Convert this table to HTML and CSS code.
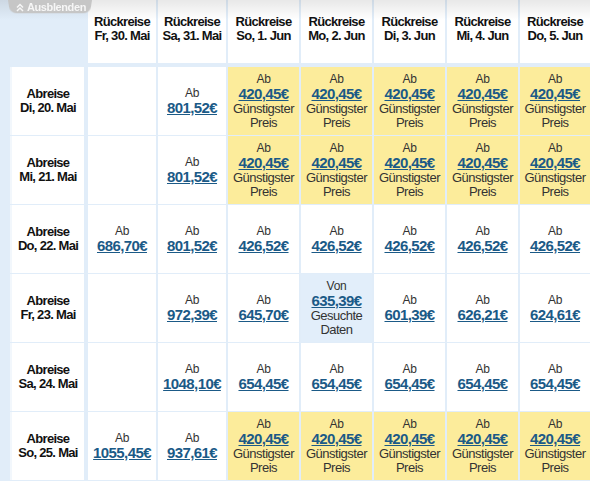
FILE: index.html
```html
<!DOCTYPE html>
<html lang="de">
<head>
  <meta charset="UTF-8">
  <meta name="viewport" content="width=device-width, initial-scale=1.0">
  <title>Flexible Reisedaten</title>
  <link rel="stylesheet" href="styles.css">
</head>
<body>
  <div class="matrix">
    <div class="head">
      <div class="corner">
        <button class="toggle">
          <svg width="8" height="9" viewBox="0 0 8 9"><polyline points="1,4.5 4,1.5 7,4.5"/><polyline points="1,8 4,5 7,8"/></svg>
          Ausblenden
        </button>
      </div>
      <div class="col-head">Rückreise<br>Fr, 30. Mai</div>
      <div class="col-head">Rückreise<br>Sa, 31. Mai</div>
      <div class="col-head">Rückreise<br>So, 1. Jun</div>
      <div class="col-head">Rückreise<br>Mo, 2. Jun</div>
      <div class="col-head">Rückreise<br>Di, 3. Jun</div>
      <div class="col-head">Rückreise<br>Mi, 4. Jun</div>
      <div class="col-head">Rückreise<br>Do, 5. Jun</div>
    </div>

    <div class="grid">
      <!-- Di, 20. Mai -->
      <div class="row-head">Abreise<br>Di, 20. Mai</div>
      <div class="cell"></div>
      <div class="cell"><span class="lbl">Ab</span><a class="price" href="#">801,52€</a></div>
      <div class="cell best"><span class="lbl">Ab</span><a class="price" href="#">420,45€</a><span class="note">Günstigster<br>Preis</span></div>
      <div class="cell best"><span class="lbl">Ab</span><a class="price" href="#">420,45€</a><span class="note">Günstigster<br>Preis</span></div>
      <div class="cell best"><span class="lbl">Ab</span><a class="price" href="#">420,45€</a><span class="note">Günstigster<br>Preis</span></div>
      <div class="cell best"><span class="lbl">Ab</span><a class="price" href="#">420,45€</a><span class="note">Günstigster<br>Preis</span></div>
      <div class="cell best"><span class="lbl">Ab</span><a class="price" href="#">420,45€</a><span class="note">Günstigster<br>Preis</span></div>

      <!-- Mi, 21. Mai -->
      <div class="row-head">Abreise<br>Mi, 21. Mai</div>
      <div class="cell"></div>
      <div class="cell"><span class="lbl">Ab</span><a class="price" href="#">801,52€</a></div>
      <div class="cell best"><span class="lbl">Ab</span><a class="price" href="#">420,45€</a><span class="note">Günstigster<br>Preis</span></div>
      <div class="cell best"><span class="lbl">Ab</span><a class="price" href="#">420,45€</a><span class="note">Günstigster<br>Preis</span></div>
      <div class="cell best"><span class="lbl">Ab</span><a class="price" href="#">420,45€</a><span class="note">Günstigster<br>Preis</span></div>
      <div class="cell best"><span class="lbl">Ab</span><a class="price" href="#">420,45€</a><span class="note">Günstigster<br>Preis</span></div>
      <div class="cell best"><span class="lbl">Ab</span><a class="price" href="#">420,45€</a><span class="note">Günstigster<br>Preis</span></div>

      <!-- Do, 22. Mai -->
      <div class="row-head">Abreise<br>Do, 22. Mai</div>
      <div class="cell"><span class="lbl">Ab</span><a class="price" href="#">686,70€</a></div>
      <div class="cell"><span class="lbl">Ab</span><a class="price" href="#">801,52€</a></div>
      <div class="cell"><span class="lbl">Ab</span><a class="price" href="#">426,52€</a></div>
      <div class="cell"><span class="lbl">Ab</span><a class="price" href="#">426,52€</a></div>
      <div class="cell"><span class="lbl">Ab</span><a class="price" href="#">426,52€</a></div>
      <div class="cell"><span class="lbl">Ab</span><a class="price" href="#">426,52€</a></div>
      <div class="cell"><span class="lbl">Ab</span><a class="price" href="#">426,52€</a></div>

      <!-- Fr, 23. Mai -->
      <div class="row-head">Abreise<br>Fr, 23. Mai</div>
      <div class="cell"></div>
      <div class="cell"><span class="lbl">Ab</span><a class="price" href="#">972,39€</a></div>
      <div class="cell"><span class="lbl">Ab</span><a class="price" href="#">645,70€</a></div>
      <div class="cell picked"><span class="lbl">Von</span><a class="price" href="#">635,39€</a><span class="note">Gesuchte<br>Daten</span></div>
      <div class="cell"><span class="lbl">Ab</span><a class="price" href="#">601,39€</a></div>
      <div class="cell"><span class="lbl">Ab</span><a class="price" href="#">626,21€</a></div>
      <div class="cell"><span class="lbl">Ab</span><a class="price" href="#">624,61€</a></div>

      <!-- Sa, 24. Mai -->
      <div class="row-head">Abreise<br>Sa, 24. Mai</div>
      <div class="cell"></div>
      <div class="cell"><span class="lbl">Ab</span><a class="price" href="#">1048,10€</a></div>
      <div class="cell"><span class="lbl">Ab</span><a class="price" href="#">654,45€</a></div>
      <div class="cell"><span class="lbl">Ab</span><a class="price" href="#">654,45€</a></div>
      <div class="cell"><span class="lbl">Ab</span><a class="price" href="#">654,45€</a></div>
      <div class="cell"><span class="lbl">Ab</span><a class="price" href="#">654,45€</a></div>
      <div class="cell"><span class="lbl">Ab</span><a class="price" href="#">654,45€</a></div>

      <!-- So, 25. Mai -->
      <div class="row-head">Abreise<br>So, 25. Mai</div>
      <div class="cell"><span class="lbl">Ab</span><a class="price" href="#">1055,45€</a></div>
      <div class="cell"><span class="lbl">Ab</span><a class="price" href="#">937,61€</a></div>
      <div class="cell best"><span class="lbl">Ab</span><a class="price" href="#">420,45€</a><span class="note">Günstigster<br>Preis</span></div>
      <div class="cell best"><span class="lbl">Ab</span><a class="price" href="#">420,45€</a><span class="note">Günstigster<br>Preis</span></div>
      <div class="cell best"><span class="lbl">Ab</span><a class="price" href="#">420,45€</a><span class="note">Günstigster<br>Preis</span></div>
      <div class="cell best"><span class="lbl">Ab</span><a class="price" href="#">420,45€</a><span class="note">Günstigster<br>Preis</span></div>
      <div class="cell best"><span class="lbl">Ab</span><a class="price" href="#">420,45€</a><span class="note">Günstigster<br>Preis</span></div>
    </div>
  </div>
</body>
</html>
```

FILE: styles.css
```css
body {
  margin: 0;
  font-family: "Liberation Sans", Arial, sans-serif;
  background-color: #e1edf9;
  color: #333;
  overflow: hidden;
}
.matrix {
  position: relative;
  padding-left: 10px;
}
/* grauer Verlauf oben */
.matrix::before {
  content: "";
  position: absolute;
  left: 0;
  top: 0;
  right: 0;
  height: 20px;
  background: linear-gradient(rgba(0, 0, 0, 0.09), rgba(0, 0, 0, 0));
  pointer-events: none;
}
.head, .grid {
  display: grid;
  grid-template-columns: 76px 68px 68px 71px 71px 71px 71px 70px;
  column-gap: 2px;
}
.head {
  height: 63px;
  margin-bottom: 4px;
}
.corner {
  position: relative;
  z-index: 2;
}
.toggle {
  position: relative;
  display: flex;
  align-items: center;
  gap: 3px;
  width: 84px;
  height: 14px;
  margin-left: -2px;
  padding: 0 0 0 8px;
  border: none;
  background: none;
  font-family: inherit;
  font-size: 11px;
  font-weight: bold;
  letter-spacing: -0.4px;
  color: #f6f6f6;
  cursor: pointer;
}
.toggle::before {
  content: "";
  position: absolute;
  inset: 0;
  z-index: -1;
  background-color: #c6c6c6;
  border-radius: 0 0 7px 7px;
  transform: perspective(20px) rotateX(-4deg);
  transform-origin: top;
}
.toggle svg {
  fill: none;
  stroke: #f6f6f6;
  stroke-width: 1.5;
}
.col-head {
  background-color: #fff;
  text-align: center;
  font-size: 13px;
  font-weight: bold;
  line-height: 14px;
  letter-spacing: -0.7px;
  color: #111;
  padding-top: 15px;
}
.grid {
  grid-auto-rows: 68px;
  row-gap: 1px;
}
.row-head {
  width: 74px;
  box-sizing: border-box;
  border-left: 2px solid #f2f7fc;
  background-color: #fff;
  display: flex;
  align-items: center;
  justify-content: center;
  text-align: center;
  font-size: 13px;
  font-weight: bold;
  line-height: 14px;
  letter-spacing: -0.7px;
  color: #111;
}
.cell {
  background-color: #fff;
  display: flex;
  flex-direction: column;
  align-items: center;
  justify-content: center;
  text-align: center;
}
.best {
  background-color: #fcec9b;
}
.picked {
  background-color: #e2eefa;
}
.lbl {
  font-size: 12px;
  line-height: 13px;
  letter-spacing: -0.3px;
  color: #333;
}
.price {
  font-size: 15px;
  font-weight: bold;
  line-height: 16px;
  letter-spacing: -0.6px;
  color: #1b5a87;
  text-decoration: underline;
}
.note {
  font-size: 13px;
  line-height: 14px;
  letter-spacing: -0.5px;
  color: #333;
}
```
